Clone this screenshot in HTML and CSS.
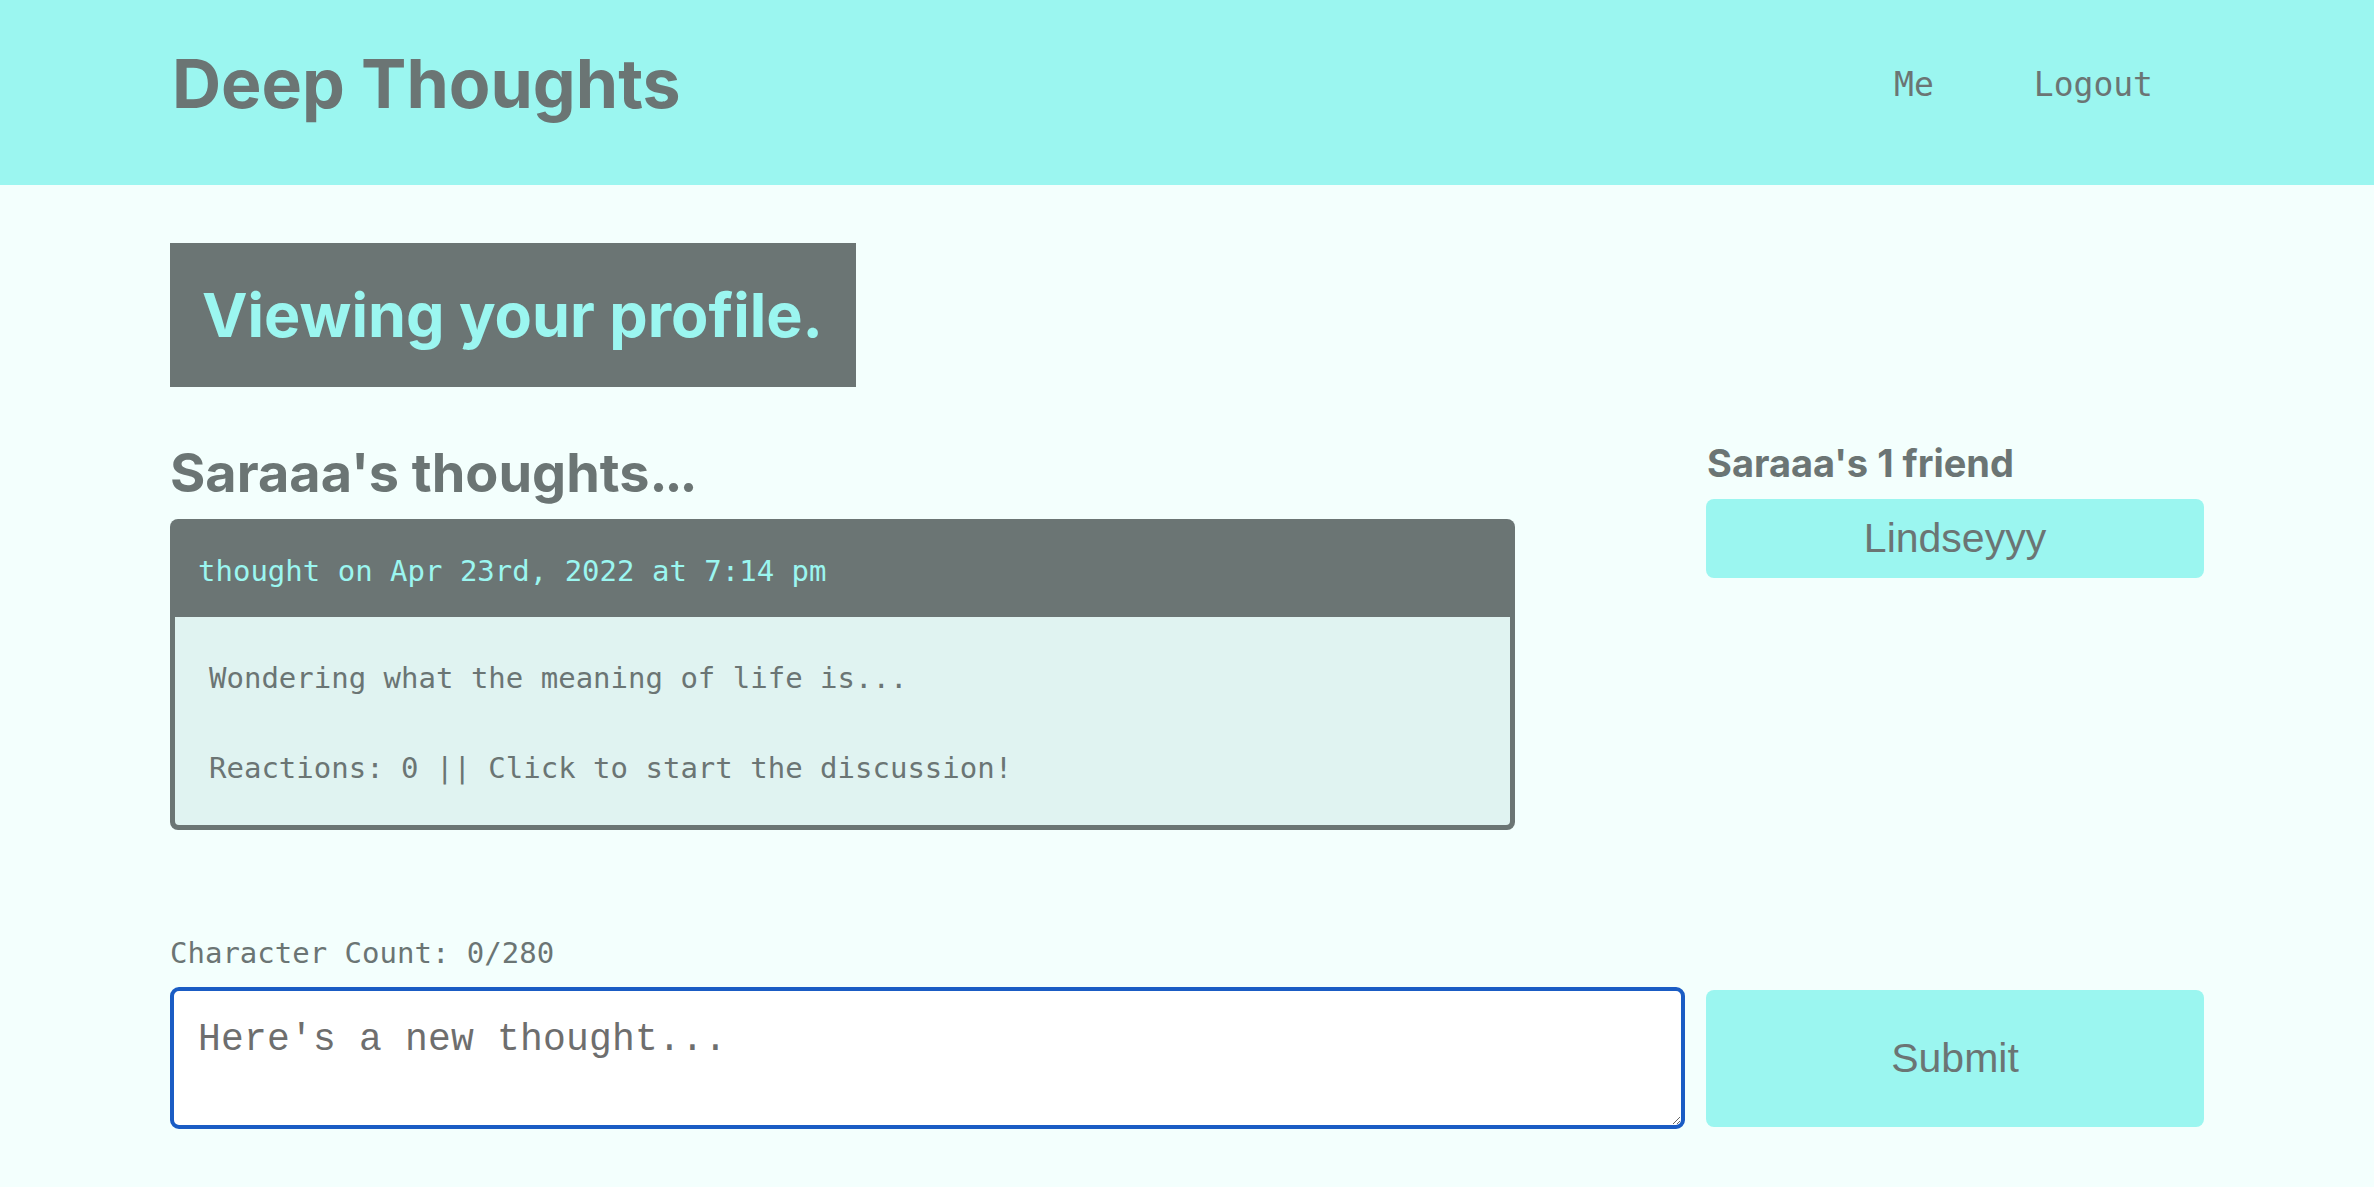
FILE: index.html
```html
<!DOCTYPE html>
<html lang="en">
<head>
<meta charset="utf-8">
<title>Deep Thoughts</title>
<link rel="stylesheet" href="styles.css">
</head>
<body>
<header class="site-header">
  <div class="container header-inner">
    <h1 class="brand">Deep Thoughts</h1>
    <nav class="nav">
      <a href="#" class="nav-link">Me</a>
      <a href="#" class="nav-link">Logout</a>
    </nav>
  </div>
</header>
<main class="container main">
  <h2 class="banner">Viewing your profile.</h2>
  <div class="grid">
    <section class="thoughts">
      <h3 class="thoughts-title">Saraaa's thoughts<span class="dots">...</span></h3>
      <div class="card">
        <p class="card-header">thought on Apr 23rd, 2022 at 7:14 pm</p>
        <div class="card-body">
          <p class="card-text">Wondering what the meaning of life is...</p>
          <p class="card-text">Reactions: 0 || Click to start the discussion!</p>
        </div>
      </div>
    </section>
    <aside class="friends">
      <h5 class="friends-title">Saraaa's 1 friend</h5>
      <button class="btn friend-btn">Lindseyyy</button>
    </aside>
    <p class="char-count">Character Count: 0/280</p>
    <div></div>
    <textarea class="thought-input" placeholder="Here's a new thought..."></textarea>
    <button class="btn submit-btn">Submit</button>
  </div>
</main>
</body>
</html>
```

FILE: styles.css
```css
* { box-sizing: border-box; }
html, body { margin: 0; padding: 0; }
body {
  background: #f3fffd;
  color: #6b7574;
  font-family: "DejaVu Sans Mono", "Liberation Mono", monospace;
}
.container {
  width: 2034px;
  margin: 0 auto;
}
.site-header {
  background: #9bf6f0;
  height: 185px;
}
.header-inner {
  display: flex;
  justify-content: space-between;
  align-items: flex-start;
  padding-top: 43px;
}
.brand {
  margin: 0;
  font-family: Inter, "Open Sans", sans-serif;
  font-weight: 700;
  font-size: 68px;
  line-height: 80px;
  color: #6b7574;
  padding-left: 2px;
}
.nav {
  display: flex;
  gap: 100px;
  padding-top: 23px;
  padding-right: 51px;
}
.nav-link {
  font-family: "DejaVu Sans Mono", monospace;
  font-size: 33px;
  color: #6b7574;
  text-decoration: none;
  line-height: 38px;
}
.main {
  padding-top: 58px;
}
.banner {
  display: inline-block;
  margin: 0;
  background: #6b7574;
  color: #9bf6f0;
  font-family: Inter, "Open Sans", sans-serif;
  font-weight: 700;
  font-size: 61px;
  line-height: 72px;
  padding: 36px 33px 36px 32px;
}
.grid {
  display: grid;
  grid-template-columns: 1fr 498px;
  column-gap: 21px;
  margin-top: 53px;
}
.thoughts-title {
  margin: 0 0 14px;
  font-family: Inter, "Open Sans", sans-serif;
  font-weight: 700;
  font-size: 54px;
  line-height: 65px;
  color: #6b7574;
}
.dots {
  letter-spacing: -3px;
}
.card {
  width: 1345px;
  border-radius: 8px;
  overflow: hidden;
  background: #6b7574;
}
.card-header {
  margin: 0;
  color: #9bf6f0;
  font-size: 29px;
  line-height: 34px;
  padding: 35px 28px 29px;
}
.card-body {
  background: #e0f3f1;
  margin: 0 5px 5px;
  padding: 44px 30px 40px 34px;
  border-radius: 0 0 4px 4px;
}
.card-text {
  margin: 0;
  font-size: 29px;
  line-height: 34px;
  color: #6b7574;
}
.card-text + .card-text {
  margin-top: 56px;
}
.friends {
  padding-top: 1px;
}
.friends-title {
  margin: 0 0 13px;
  font-family: Inter, "Open Sans", sans-serif;
  font-weight: 700;
  font-size: 38px;
  line-height: 45px;
  color: #6b7574;
  padding-left: 1px;
}
.btn {
  display: block;
  width: 100%;
  border: none;
  border-radius: 8px;
  background: #9bf6f0;
  color: #6b7574;
  font-family: "Liberation Sans", Arial, sans-serif;
  font-size: 41px;
  line-height: 47px;
  cursor: pointer;
}
.friend-btn {
  padding: 16px 0;
}
.char-count {
  margin: 106px 0 17px;
  font-size: 29px;
  line-height: 34px;
}
.thought-input {
  display: block;
  width: 100%;
  height: 142px;
  border: 4px solid #1a5cc4;
  border-radius: 9px;
  background: #ffffff;
  padding: 27px 24px;
  font-family: "Liberation Mono", "Courier New", monospace;
  font-size: 38px;
  letter-spacing: 0.2px;
  line-height: 43px;
  color: #6b7574;
  outline: none;
  resize: vertical;
}
.thought-input::placeholder {
  color: #6e6e6e;
}
.submit-btn {
  align-self: center;
  height: 137px;
}
```
